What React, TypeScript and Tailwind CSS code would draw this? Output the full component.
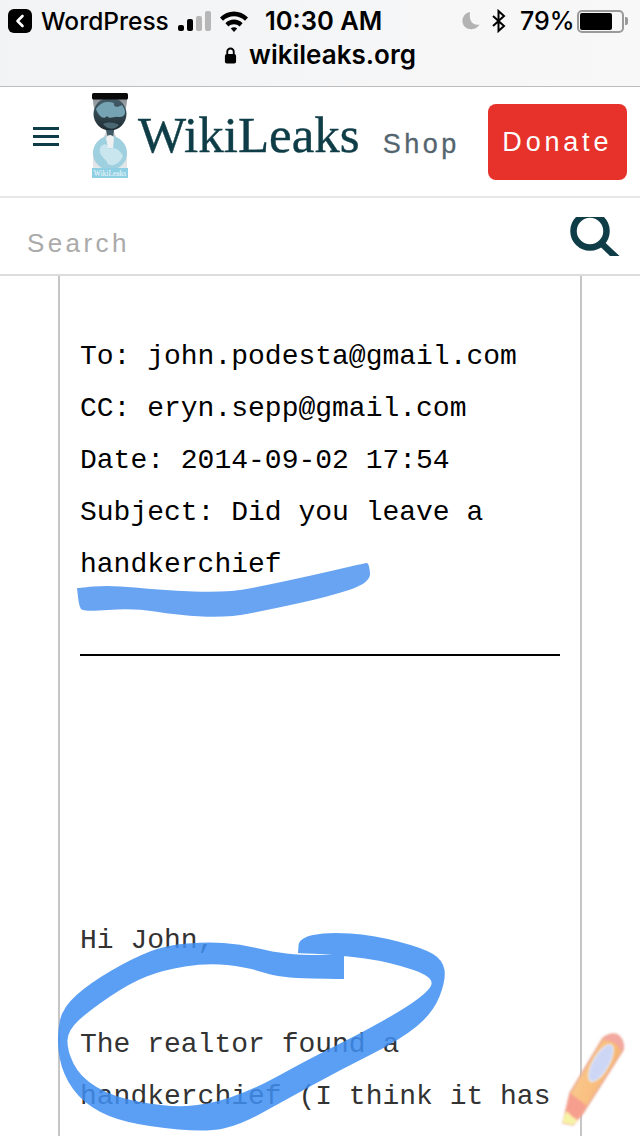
import React from 'react';

// smooth closed outline through hand-traced points; a doubled point keeps a hard corner
const outline = (pts: number[][]) => {
  const mid = (a: number[], b: number[]) => [(a[0] + b[0]) / 2, (a[1] + b[1]) / 2];
  const start = mid(pts[pts.length - 1], pts[0]);
  let d = `M${start[0]} ${start[1]}`;
  pts.forEach((p, i) => {
    const m = mid(p, pts[(i + 1) % pts.length]);
    d += ` Q${p[0]} ${p[1]} ${m[0]} ${m[1]}`;
  });
  return d + ' Z';
};

const underline = [
  [77, 588], [77, 588], [110, 585], [160, 590], [227, 593], [277, 583], [327, 572], [365, 563], [369, 563],
  [371, 583], [327, 597], [277, 608], [227, 618], [177, 615], [133, 608], [83, 612], [79, 606],
];

const loop = [
  [344, 955], [344, 955], [300, 955], [273, 952], [240, 944], [207, 942], [167, 945], [133, 958], [90, 983], [63, 1007],
  [57, 1033], [60, 1067], [77, 1097], [107, 1117], [150, 1127], [207, 1132], [240, 1125], [280, 1103],
  [340, 1070], [400, 1040], [433, 1013], [446, 980], [443, 960], [423, 948], [373, 935], [327, 932], [299, 938],
  [298, 953], [298, 953], [340, 955], [390, 962], [437, 978], [423, 997], [373, 1027], [307, 1060], [253, 1090],
  [207, 1105], [167, 1107], [113, 1097], [80, 1077], [67, 1050], [68, 1030], [90, 1010], [130, 983], [163, 970],
  [207, 963], [247, 967], [280, 978], [344, 979], [344, 979],
];

const Hourglass = () => (
  <svg width="36" height="85" viewBox="0 0 36 85" className="shrink-0">
    <defs>
      <linearGradient id="glass" x1="0" y1="0" x2="0" y2="1">
        <stop offset="0" stopColor="#8f9599" />
        <stop offset="0.5" stopColor="#c9cdd0" />
        <stop offset="1" stopColor="#e4e8ea" />
      </linearGradient>
      <linearGradient id="topGlobe" x1="0" y1="0" x2="0" y2="1">
        <stop offset="0" stopColor="#46606c" />
        <stop offset="1" stopColor="#1f2c33" />
      </linearGradient>
    </defs>
    <path d="M1 6 C1 24 12 30 14 38 C14 44 5 50 1 60 L1 76 L35 76 L35 60 C31 50 22 44 22 38 C24 30 35 24 35 6 Z" fill="url(#glass)" />
    <circle cx="18" cy="21" r="16.5" fill="url(#topGlobe)" />
    <path d="M4 16 C9 8 17 8 22 10 C21 14 25 15 30 12 C35 18 34 25 26 24 C22 23 18 27 15 23 C12 27 7 24 4 16 Z" fill="#76a3b4" />
    <path d="M11 31 C17 28 24 30 27 32 C23 37 15 37 11 31 Z" fill="#4a6773" />
    <path d="M14 37 L22 37 L21 45 L20 51 L19 47 L17 53 L16 45 Z" fill="#3e5a66" />
    <circle cx="18" cy="60" r="17" fill="#9fd0e0" />
    <path d="M8 55 C12 48 17 52 17 56 C22 53 28 57 31 63 C28 71 20 74 16 71 C14 65 6 63 8 55 Z" fill="#c9e5ee" />
    <path d="M14 45 C16 41 20 41 22 45 L21 55 L16 55 Z" fill="#eef0f1" />
    <rect x="0" y="0" width="36" height="6.5" rx="1.5" fill="#0a0a0a" />
    <rect x="0" y="75" width="36" height="10" fill="#8fcfe3" />
    <text x="18" y="83" textAnchor="middle" fontSize="7.5" fill="#f2fafc" fontFamily="Liberation Serif">WikiLeaks</text>
  </svg>
);

const Mono = ({ children }: { children: React.ReactNode }) => (
  <div className="h-[52px] leading-[52px] whitespace-pre">{children}</div>
);

export default function App() {
  return (
    <div className="relative flex flex-col w-[640px] h-[1136px] overflow-hidden bg-white font-['Inter',sans-serif]">
      {/* browser chrome */}
      <header className="shrink-0 h-[87px] border-b border-[#bdbdbd] bg-gradient-to-r from-[#f2f3f4] to-[#f8f8f9] text-black">
        <div className="flex items-center h-[42px] pl-2">
          <div className="w-6 h-6 rounded-[6px] bg-black flex items-center justify-center">
            <svg width="12" height="14" viewBox="0 0 12 14" fill="none" stroke="white" strokeWidth="2.6" strokeLinecap="round" strokeLinejoin="round"><path d="M8.5 2 L3.5 7 L8.5 12" /></svg>
          </div>
          <span className="ml-[9px] w-[137px] text-[24.5px] leading-none font-medium">WordPress</span>
          <div className="flex items-end gap-[3px] h-[20px] w-[33px]">
            <span className="w-[6px] h-[6px] rounded-[2px] bg-black" />
            <span className="w-[6px] h-[12px] rounded-[2px] bg-black" />
            <span className="w-[6px] h-[15px] rounded-[2px] bg-[#b6b6b6]" />
            <span className="w-[6px] h-[20px] rounded-[2px] bg-[#b6b6b6]" />
          </div>
          <svg width="28" height="21" viewBox="0 0 28 21" className="ml-[9px]">
            <path d="M0 6.5 C7.5 -1.5 20.5 -1.5 28 6.5 L25 9.8 C19 3.6 9 3.6 3 9.8 Z M5.4 12.2 C10 7.4 18 7.4 22.6 12.2 L19.6 15.4 C16.6 12.4 11.4 12.4 8.4 15.4 Z M10.8 17.6 C12.6 15.8 15.4 15.8 17.2 17.6 L14 21 Z" fill="black" />
          </svg>
          <span className="ml-[17px] w-[117px] text-[25.5px] leading-none font-semibold whitespace-nowrap">10:30 AM</span>
          <svg width="18" height="20" viewBox="0 0 18 20" className="ml-[80px]">
            <path d="M8 1 C3 2 0 6 0.5 11 C1 16 6 19 11 18 C14 17.5 16 16 17.5 13.5 C12 15 6.5 11 8 1 Z" fill="#b3b3b3" />
          </svg>
          <svg width="16" height="24" viewBox="0 0 16 24" className="ml-[11px]" fill="none" stroke="black" strokeWidth="2">
            <path d="M2 7 L13 17 L7.5 22 L7.5 2 L13 7 L2 17" />
          </svg>
          <span className="ml-[13px] w-[50px] text-[25px] leading-none font-medium">79%</span>
          <div className="ml-[7px] w-[47px] h-[23px] rounded-[5px] border-2 border-[#9a9a9a] p-[1px]">
            <div className="w-[32px] h-full rounded-[2px] bg-black" />
          </div>
          <div className="w-[3px] h-[8px] ml-[1px] rounded-r-[2px] bg-[#9a9a9a]" />
        </div>
        <div className="flex items-center justify-center h-[26px] gap-[12px] text-[26px] leading-none font-semibold">
          <svg width="13" height="17" viewBox="0 0 14 18">
            <path d="M3.5 8 V5 a3.5 3.5 0 0 1 7 0 V8" fill="none" stroke="black" strokeWidth="2" />
            <rect x="1" y="7.5" width="12" height="10" rx="2" fill="black" />
          </svg>
          <span>wikileaks.org</span>
        </div>
      </header>

      {/* site nav */}
      <nav className="shrink-0 flex items-center h-[111px] border-b-2 border-[#e8e8e8]">
        <div className="ml-[33px] mt-[-11px] w-[26px] flex flex-col gap-[5px]">
          <span className="h-[3px] bg-[#0f3d47]" />
          <span className="h-[3px] bg-[#0f3d47]" />
          <span className="h-[3px] bg-[#0f3d47]" />
        </div>
        <div className="ml-[33px] mt-[-13px]"><Hourglass /></div>
        <span className="ml-[10px] mt-[-13px] text-[51px] leading-none text-[#0f3d47] [-webkit-text-stroke:0.4px_#0f3d47] font-['Liberation_Serif',serif]">WikiLeaks</span>
        <span className="ml-[23px] mt-[6px] text-[27px] leading-none tracking-[3.5px] text-[#54656f] [-webkit-text-stroke:0.3px_#54656f] font-['Liberation_Sans',sans-serif]">Shop</span>
        <div className="ml-[28px] mt-[1px] w-[139px] h-[76px] rounded-[8px] bg-[#e6322b] flex items-center justify-center text-white text-[27px] tracking-[3.8px] font-['Liberation_Sans',sans-serif]">Donate</div>
      </nav>

      {/* search */}
      <div className="shrink-0 flex items-center justify-between h-[78px] border-b-2 border-[#dcdcdc] pl-[27px] pr-[20px]">
        <span className="text-[26px] tracking-[3.4px] text-[#aaaaaa] font-['Liberation_Sans',sans-serif] mt-[14px]">Search</span>
        <svg width="50" height="39" viewBox="0 0 50 39" fill="none" stroke="#0f3d47" strokeWidth="6.5">
          <circle cx="20" cy="14" r="16.5" />
          <path d="M31 26 L49 43" />
        </svg>
      </div>

      {/* email column */}
      <main className="flex-1 ml-[58px] w-[524px] border-x-2 border-[#c6c6c6] pl-[20px] pr-[20px] pt-[55px] font-['Liberation_Mono',monospace] text-[28px] text-black">
        <Mono>To: john.podesta@gmail.com</Mono>
        <Mono>CC: eryn.sepp@gmail.com</Mono>
        <Mono>Date: 2014-09-02 17:54</Mono>
        <Mono>Subject: Did you leave a</Mono>
        <Mono>handkerchief</Mono>
        <div className="mt-[63px] mb-[259px] h-[2px] bg-black" />
        <div className="text-[#333333]">
          <Mono>Hi John,</Mono>
          <Mono> </Mono>
          <Mono>The realtor found a</Mono>
          <Mono>handkerchief (I think it has</Mono>
        </div>
      </main>

      {/* marker strokes drawn on top of the page */}
      <svg width="640" height="1136" viewBox="0 0 640 1136" className="absolute inset-0 pointer-events-none opacity-[0.85] blur-[0.7px]">
        <path d={outline(underline)} fill="#4f95f0" />
        <path d={outline(loop)} fill="#3f8ff3" />
      </svg>

      {/* pencil badge */}
      <svg width="66" height="104" viewBox="0 0 66 104" className="absolute left-[561px] top-[1031px] blur-[0.8px]">
        <defs>
          <linearGradient id="pen" x1="0" y1="0" x2="1" y2="0.4">
            <stop offset="0" stopColor="#fbd29a" />
            <stop offset="1" stopColor="#f7b36f" />
          </linearGradient>
        </defs>
        <path d="M42 7 C48 3 54 2 58 5 C62 9 63 15 62 19 L22 82 L12 94 L2 92 L9 62 Z" fill="url(#pen)" stroke="#e9a792" strokeWidth="1.5" />
        <ellipse cx="40" cy="32" rx="8" ry="21" transform="rotate(29.5 40 32)" fill="#cdd6f5" stroke="#eef0fb" strokeWidth="1" />
        <path d="M9 62 L25 74 L22 82 L12 94 L2 92 Z" fill="#f79f8e" />
        <path d="M2 92 C2 84 5 82 6 80 C9 84 14 88 17 89 L12 94 Z" fill="#f6f3a6" />
        <path d="M42 7 C48 3 54 2 58 5 C62 9 63 15 62 19 L60 21 C58 14 52 9 44 10 Z" fill="#f3a8a0" />
      </svg>
    </div>
  );
}
